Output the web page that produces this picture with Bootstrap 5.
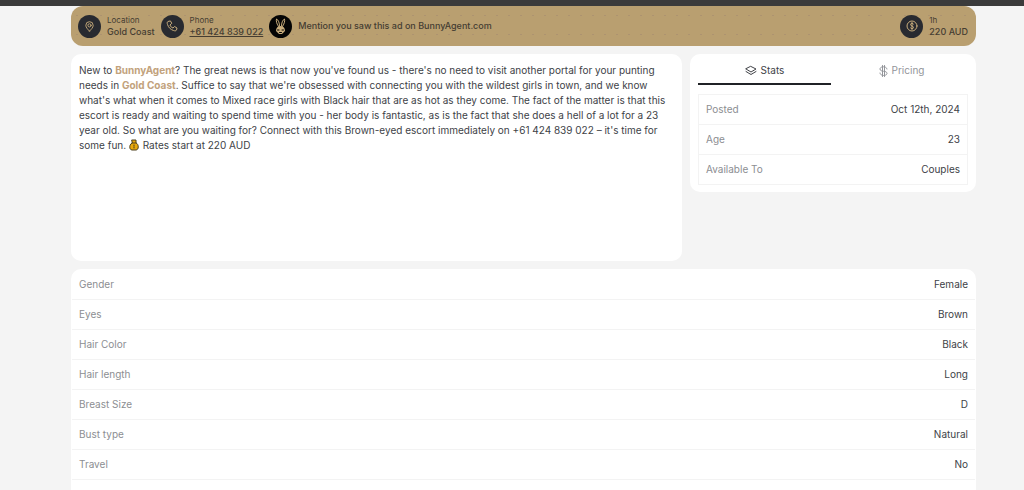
<!DOCTYPE html>
<html lang="en">
<head>
<meta charset="utf-8">
<meta name="viewport" content="width=device-width, initial-scale=1">
<title>BunnyAgent</title>
<link href="https://cdn.jsdelivr.net/npm/bootstrap@5.3.0/dist/css/bootstrap.min.css" rel="stylesheet">
<style>
  body { font-family: Inter, "Liberation Sans", sans-serif; font-size: 10px; line-height: 15px; color: #404247; background: #f4f4f4; }
  .topbar { height: 6px; background: #3b3b3b; }
  .page { padding: 0 48px 0 71px; }
  .panel { background: #fff; border-radius: 10px; }
  .contact { border-radius: 12px; padding: 0 8px 0 7px; min-height: 40px; gap: 6px; color: #453d32;
    background: #b99f70 radial-gradient(circle, #ad9370 1px, transparent 1px) 0 0 / 12px 19px; }
  .contact a { color: inherit; }
  .contact small { font-size: 8px; line-height: 12px; display: block; }
  .contact strong { font-size: 9px; line-height: 12px; font-weight: 500; display: block; }
  .disc { width: 23px; height: 23px; border-radius: 50%; background: #282a30; color: #c9ad7c; flex: none; }
  .disc-logo { background: #050505; }
  svg { fill: none; stroke: currentColor; stroke-linecap: round; stroke-linejoin: round; flex: none; }
  .about { flex: 1 1 0; min-height: 207px; padding: 9px 16px 10px 8px; }
  .about a { color: #c2a27c; font-weight: 700; text-decoration: none; }
  .side { flex: 0 0 286px; padding: 0 8px 7px; align-self: flex-start; }
  .coin { vertical-align: -2px; margin-right: 1px; }
  .side .tab { flex: 1 1 0; border: 0; border-bottom: 2px solid transparent; background: none; color: #93959a; padding: 9px 0 5px; line-height: 15px; }
  .side .tab.active { border-color: #202226; color: #404247; }
  .tabs { margin-bottom: 9px; }
  .facts { --bs-table-bg: transparent; margin: 0; border-color: #f3f3f3; line-height: 15px; }
  .facts th, .facts td { padding: 7px; border-bottom: 1px solid #f3f3f3; font-weight: 400; }
  .facts th { color: #8c8e92; }
  .facts td { color: #404247; text-align: right; }
  .side .facts { border: 1px solid #f3f3f3; }
  .details { padding: 1px; }
</style>
</head>
<body>
<div class="topbar"></div>
<main class="page">
  <header class="contact d-flex align-items-center">
    <span class="disc d-flex align-items-center justify-content-center"><svg width="11" height="11" viewBox="0 0 24 24" stroke-width="2"><path d="M12 22C8 18 4 14 4 9.500a8 8 0 0 1 16 0C20 14 16 18 12 22Z"/><circle cx="12" cy="9.500" r="3.500"/></svg></span>
    <div><small>Location</small><strong>Gold Coast</strong></div>
    <span class="disc d-flex align-items-center justify-content-center"><svg width="12" height="12" viewBox="0 0 24 24" stroke-width="2"><path d="M8 2 4 3C2 4 2 6 3 9c2 6 6 10 12 12 3 1 5 1 6-1l1-4-5-3-3 3c-3-1-5-3-6-6l3-3Z"/></svg></span>
    <div><small>Phone</small><strong><a href="tel:+61424839022">+61 424 839 022</a></strong></div>
    <span class="disc disc-logo d-flex align-items-center justify-content-center"><svg width="17" height="19" viewBox="0 0 17 19"><path d="M7 10C4.500 7 4 4 4.500 2c2 1 3 4 3 7M10 10c2.500-3 3-6 2.500-8-2 1-3 4-3 7"/><path d="M8.500 9C5 9 4 12 4 14l3 3h3l3-3c0-2-1-5-4.500-5Z" fill="currentColor" stroke="none"/><path d="M5.500 13h1.500M10 13h1.500M7.500 15.500h2" stroke="#050505"/></svg></span>
    <strong>Mention you saw this ad on BunnyAgent.com</strong>
    <span class="disc d-flex align-items-center justify-content-center ms-auto"><svg width="12" height="12" viewBox="0 0 24 24" stroke-width="2"><circle cx="12" cy="12" r="10"/><path d="M15 8c-1-2-6-2-6 1 0 4 6 2 6 6 0 3-5 3-6 1M12 5v14"/></svg></span>
    <div><small>1h</small><strong>220 AUD</strong></div>
  </header>

  <div class="d-flex gap-2 my-2">
    <section class="panel about">
      New to <a href="#">BunnyAgent</a>? The great news is that now you've found us - there's no need to visit another portal for your punting needs in <a href="#">Gold Coast</a>. Suffice to say that we're obsessed with connecting you with the wildest girls in town, and we know what's what when it comes to Mixed race girls with Black hair that are as hot as they come. The fact of the matter is that this escort is ready and waiting to spend time with you - her body is fantastic, as is the fact that she does a hell of a lot for a 23 year old. So what are you waiting for? Connect with this Brown-eyed escort immediately on +61 424 839 022 – it's time for some fun. <svg class="coin" width="10" height="12" viewBox="0 0 10 12" role="img" aria-label="Money bag"><path d="M3 1h4v3c3 1 3 7 0 7H3C0 11 0 5 3 4Z" fill="#e8a90c" stroke="#4d411f"/><path d="M3 4h4M5 6v1M5 8v1" stroke="#4d411f"/></svg> Rates start at 220 AUD
    </section>
    <aside class="panel side">
      <div class="tabs d-flex gap-1" role="tablist">
        <button type="button" class="tab active d-flex justify-content-center align-items-center gap-1" role="tab" aria-selected="true"><svg width="12" height="12" viewBox="0 0 24 24" stroke-width="2"><path d="m12 3 10 5-10 6L2 8ZM2 13l10 6 10-6"/></svg>Stats</button>
        <button type="button" class="tab d-flex justify-content-center align-items-center gap-1" role="tab" aria-selected="false"><svg width="9" height="12" viewBox="0 0 18 24" stroke-width="2"><path d="M16 8c0-6-14-6-14 0 0 7 14 2 14 9 0 5-14 6-14-1M7 1v22M11 1v22"/></svg>Pricing</button>
      </div>
      <table class="table facts">
        <tbody>
          <tr><th scope="row">Posted</th><td>Oct 12th, 2024</td></tr>
          <tr><th scope="row">Age</th><td>23</td></tr>
          <tr><th scope="row">Available To</th><td>Couples</td></tr>
        </tbody>
      </table>
    </aside>
  </div>

  <section class="panel details">
    <table class="table facts">
      <tbody>
        <tr><th scope="row">Gender</th><td>Female</td></tr>
        <tr><th scope="row">Eyes</th><td>Brown</td></tr>
        <tr><th scope="row">Hair Color</th><td>Black</td></tr>
        <tr><th scope="row">Hair length</th><td>Long</td></tr>
        <tr><th scope="row">Breast Size</th><td>D</td></tr>
        <tr><th scope="row">Bust type</th><td>Natural</td></tr>
        <tr><th scope="row">Travel</th><td>No</td></tr>
        <tr><th scope="row">&nbsp;</th><td></td></tr>
      </tbody>
    </table>
  </section>
</main>
</body>
</html>
